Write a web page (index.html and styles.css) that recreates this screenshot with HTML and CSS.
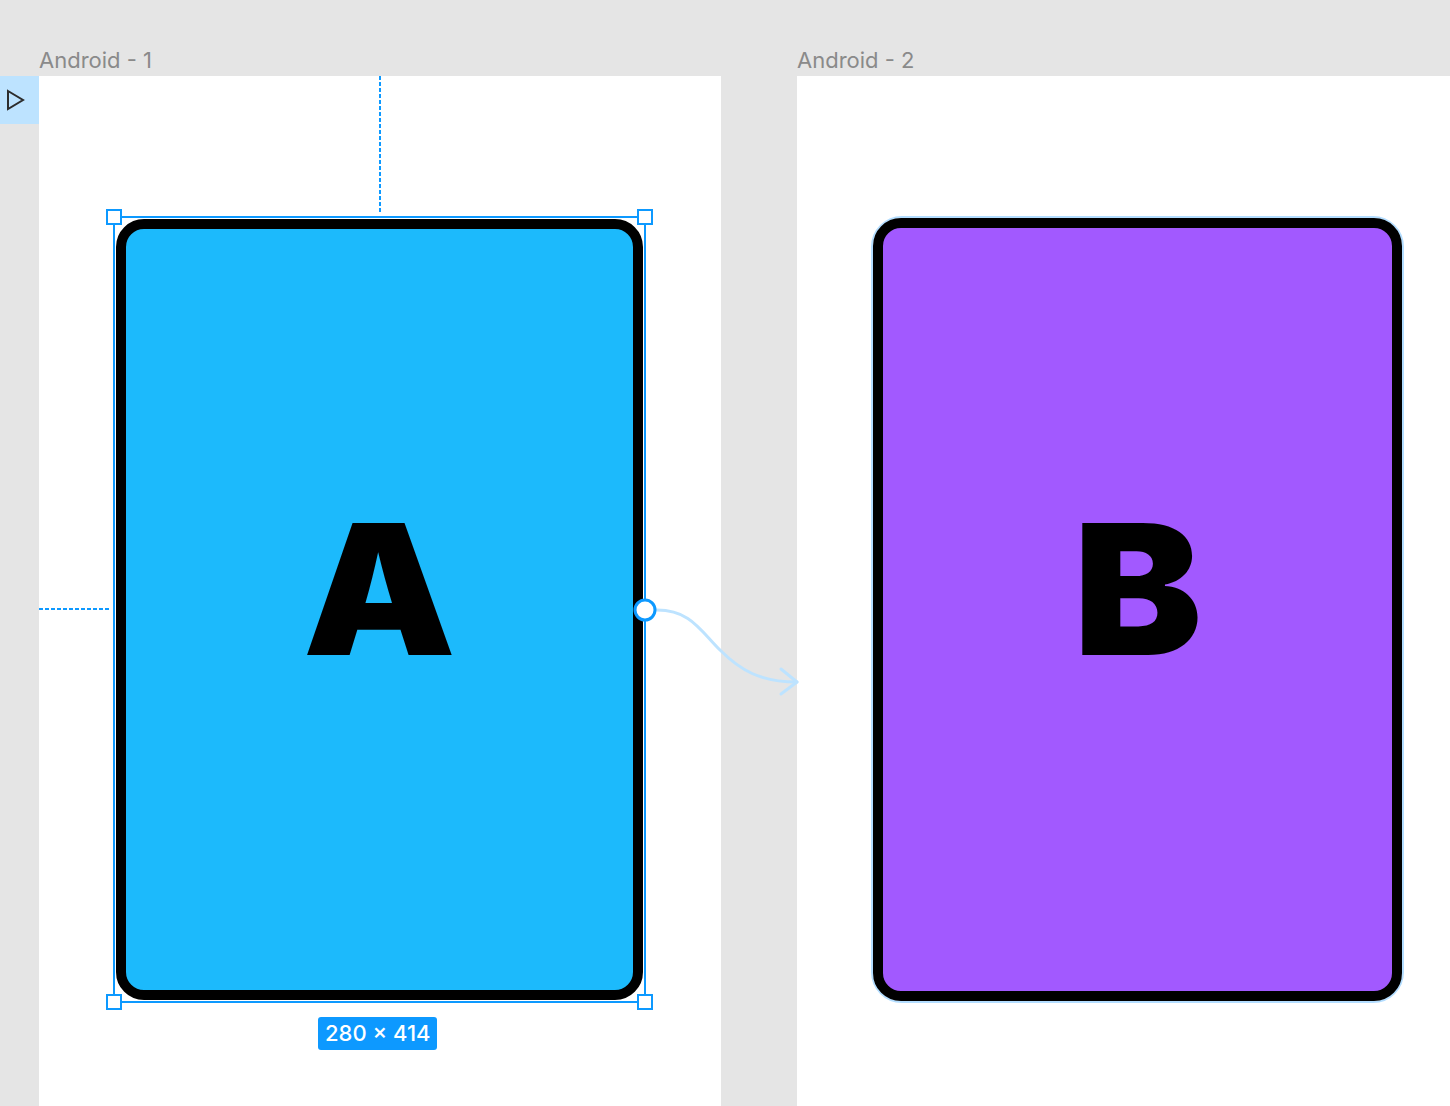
FILE: index.html
```html
<!DOCTYPE html>
<html>
<head>
<meta charset="utf-8">
<link rel="stylesheet" href="styles.css">
</head>
<body>
<div class="canvas">
  <div class="play-btn">
    <svg width="20" height="22" viewBox="0 0 20 22"><path d="M2 2 L17 11 L2 20 Z" fill="none" stroke="#2c2c2c" stroke-width="2" stroke-linejoin="miter"/></svg>
  </div>
  <section class="frame frame-1">
    <div class="frame-label">Android - 1</div>
    <div class="frame-body">
      <div class="guide guide-v"></div>
      <div class="guide guide-h"></div>
      <div class="selection">
        <div class="card card-a"><span class="letter">A</span></div>
        <span class="handle h-tl"></span>
        <span class="handle h-tr"></span>
        <span class="handle h-bl"></span>
        <span class="handle h-br"></span>
        <div class="size-badge">280 × 414</div>
      </div>
    </div>
  </section>
  <section class="frame frame-2">
    <div class="frame-label">Android - 2</div>
    <div class="frame-body">
      <div class="hover-box">
        <div class="card card-b"><span class="letter">B</span></div>
      </div>
    </div>
  </section>
  <svg class="connector" width="1450" height="1106" viewBox="0 0 1450 1106">
    <path d="M657 610 C690 610 700 630 720 650 S760 682 797 682" fill="none" stroke="#bde3ff" stroke-width="3" stroke-linecap="round"/>
    <path d="M781 669 L797 682 L781 694" fill="none" stroke="#bde3ff" stroke-width="3" stroke-linecap="round" stroke-linejoin="round"/>
    <circle cx="645" cy="610" r="10" fill="#fff" stroke="#0d99ff" stroke-width="3"/>
  </svg>
</div>
</body>
</html>
```
FILE: styles.css
```css
* { box-sizing: border-box; }
html, body {
  margin: 0;
  padding: 0;
  background: #e5e5e5;
  width: 1450px;
  height: 1106px;
  overflow: hidden;
  font-family: Inter, "Noto Sans", sans-serif;
}
.canvas {
  position: relative;
  display: flex;
  gap: 76px;
  padding-left: 39px;
  height: 1106px;
}
.play-btn {
  position: absolute;
  left: 0;
  top: 76px;
  width: 39px;
  height: 48px;
  background: #bde3ff;
  display: flex;
  align-items: center;
  justify-content: flex-start;
  padding-left: 6px;
}
.frame {
  display: flex;
  flex-direction: column;
  flex-shrink: 0;
}
.frame-1 { width: 682px; }
.frame-2 { width: 700px; }
.frame-label {
  height: 76px;
  font-size: 22px;
  color: #8a8a8a;
  line-height: 26px;
  padding-top: 47px;
  padding-left: 0;
}
.frame-body {
  position: relative;
  flex: 1;
  background: #fff;
  padding: 140px 0 0 74px;
}
.selection {
  position: relative;
  width: 533px;
  height: 787px;
  border: 2px solid #0d99ff;
  padding: 1px;
}
.hover-box {
  width: 533px;
  height: 787px;
  border: 2px solid #b3ddff;
  border-radius: 31px;
  padding: 0;
}
.card {
  width: 100%;
  height: 100%;
  border: 10px solid #000;
  border-radius: 28px;
  display: flex;
  align-items: center;
  justify-content: center;
  padding-bottom: 42px;
}
.card-a { background: #1cbafc; }
.card-b { background: #a259ff; }
.letter {
  font-family: Inter, "Liberation Sans", sans-serif;
  font-weight: 900;
  font-size: 182px;
  line-height: 1;
  color: #000;
  display: inline-block;
  transform: scaleX(1.06);
}
.handle {
  position: absolute;
  width: 16px;
  height: 16px;
  background: #fff;
  border: 2px solid #0d99ff;
}
.h-tl { left: -9px; top: -9px; }
.h-tr { right: -9px; top: -9px; }
.h-bl { left: -9px; bottom: -9px; }
.h-br { right: -9px; bottom: -9px; }
.size-badge {
  position: absolute;
  left: 203px;
  top: 799px;
  height: 33px;
  padding: 0 7px;
  background: #0d99ff;
  color: #fff;
  border-radius: 3px;
  font-size: 22px;
  font-weight: 500;
  line-height: 33px;
  white-space: nowrap;
}
.guide {
  position: absolute;
}
.guide-v {
  left: 340px;
  top: 0;
  height: 138px;
  width: 2px;
  background: repeating-linear-gradient(to bottom, #0d99ff 0 4px, transparent 4px 6px);
}
.guide-h {
  left: 0;
  top: 532px;
  width: 72px;
  height: 2px;
  background: repeating-linear-gradient(to right, #0d99ff 0 4px, transparent 4px 6px);
}
.connector {
  position: absolute;
  left: 0;
  top: 0;
  pointer-events: none;
}
```
